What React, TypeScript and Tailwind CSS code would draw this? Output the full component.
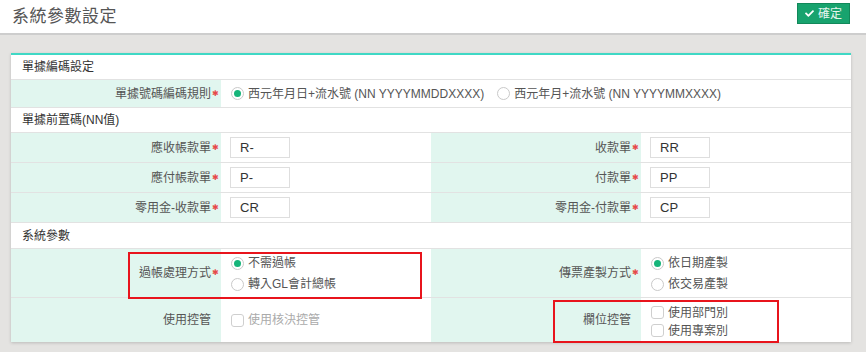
import { FaCheck } from "react-icons/fa"

const font = { fontFamily: '"Liberation Sans", "Noto Sans CJK TC", sans-serif' }

function Radio({ checked, label }: { checked?: boolean; label: string }) {
  return (
    <label className="flex items-center gap-[4px] text-[12px] text-[#555] leading-none">
      <span className="w-[13px] h-[13px] rounded-full border border-[#c9c9c9] bg-white flex items-center justify-center">
        {checked && <span className="w-[7px] h-[7px] rounded-full bg-[#16b47a]" />}
      </span>
      {label}
    </label>
  )
}

function Check({ label, disabled }: { label: string; disabled?: boolean }) {
  return (
    <label className={`flex items-center gap-[4px] text-[12px] leading-none ${disabled ? "text-[#aaa]" : "text-[#555]"}`}>
      <span className="w-[13px] h-[13px] rounded-[3px] border border-[#cfcfcf] bg-white" />
      {label}
    </label>
  )
}

function Label({ text, req }: { text: string; req?: boolean }) {
  return (
    <div className="relative bg-[#e1f6ef] flex items-center justify-end pr-[10px] text-[12px] text-[#555]">
      {text}
      {req && (
        <span className="absolute right-[2px] top-1/2 -translate-y-1/2 text-[8px] leading-none text-[#e64a4a]">✱</span>
      )}
    </div>
  )
}

function Field({ value }: { value: string }) {
  return (
    <div className="flex items-center pl-[9px]">
      <div className="w-[60px] h-[21px] border border-[#dedede] flex items-center pl-[9px] text-[13px] text-[#333]">
        {value}
      </div>
    </div>
  )
}

function Section({ title, h = "h-[25px]" }: { title: string; h?: string }) {
  return (
    <div className={`${h} border-b border-[#e2e2e2] flex items-center px-[11px] text-[12px] text-[#333]`}>
      {title}
    </div>
  )
}

const prefixRows = [
  ["應收帳款單", "R-", "收款單", "RR"],
  ["應付帳款單", "P-", "付款單", "PP"],
  ["零用金-收款單", "CR", "零用金-付款單", "CP"],
]

export default function App() {
  return (
    <div className="relative w-[866px] h-[352px] bg-[#e4e3e1] overflow-hidden" style={font}>
      {/* header */}
      <div className="h-[35px] bg-white border-b-2 border-[#cdcdcd] flex items-center justify-between pl-[12px] pr-[16px]">
        <h1 className="text-[17px] text-[#555] tracking-[0.5px]">系統參數設定</h1>
        <button className="h-[21px] w-[53px] mb-[6px] bg-[#18a36e] border border-[#12885a] text-[#e6f5ee] text-[12px] flex items-center justify-center gap-[4px]">
          <FaCheck className="w-[9px] h-[9px] text-white" />
          確定
        </button>
      </div>

      <div className="pt-[18px] pl-[11px]">
        <div className="w-[840px] bg-white border-t-2 border-[#3fd8c5] shadow-[0_1px_3px_rgba(0,0,0,0.18)]">
          <Section title="單據編碼設定" />
          <div className="h-[28px] grid grid-cols-[210px_630px] border-b border-[#e2e2e2]">
            <Label text="單據號碼編碼規則" req />
            <div className="flex items-center pl-[10px] gap-[13px]">
              <Radio checked label="西元年月日+流水號 (NN YYYYMMDDXXXX)" />
              <Radio label="西元年月+流水號 (NN YYYYMMXXXX)" />
            </div>
          </div>

          <Section title="單據前置碼(NN值)" />
          {prefixRows.map((r) => (
            <div key={r[0]} className="h-[30px] grid grid-cols-[210px_210px_210px_210px] border-b border-[#e2e2e2]">
              <Label text={r[0]} req />
              <Field value={r[1]} />
              <Label text={r[2]} req />
              <Field value={r[3]} />
            </div>
          ))}

          <Section title="系統參數" h="h-[26px]" />
          <div className="h-[49px] grid grid-cols-[210px_210px_210px_210px] border-b border-[#e2e2e2]">
            <Label text="過帳處理方式" req />
            <div className="flex flex-col justify-center gap-[8px] pl-[10px] pt-[1px]">
              <Radio checked label="不需過帳" />
              <Radio label="轉入GL會計總帳" />
            </div>
            <Label text="傳票產製方式" req />
            <div className="flex flex-col justify-center gap-[8px] pl-[10px] pt-[1px]">
              <Radio checked label="依日期產製" />
              <Radio label="依交易產製" />
            </div>
          </div>
          <div className="h-[44px] grid grid-cols-[210px_210px_210px_210px]">
            <Label text="使用控管" />
            <div className="flex items-center pl-[10px]">
              <Check disabled label="使用核決控管" />
            </div>
            <Label text="欄位控管" />
            <div className="flex flex-col justify-center gap-[5px] pl-[10px] pt-[3px]">
              <Check label="使用部門別" />
              <Check label="使用專案別" />
            </div>
          </div>
        </div>
      </div>

      {/* annotation boxes */}
      <div className="absolute left-[128px] top-[252px] w-[294px] h-[47px] border-2 border-[#e8141c]" />
      <div className="absolute left-[553px] top-[300px] w-[226px] h-[43px] border-2 border-[#e8141c]" />
    </div>
  )
}
